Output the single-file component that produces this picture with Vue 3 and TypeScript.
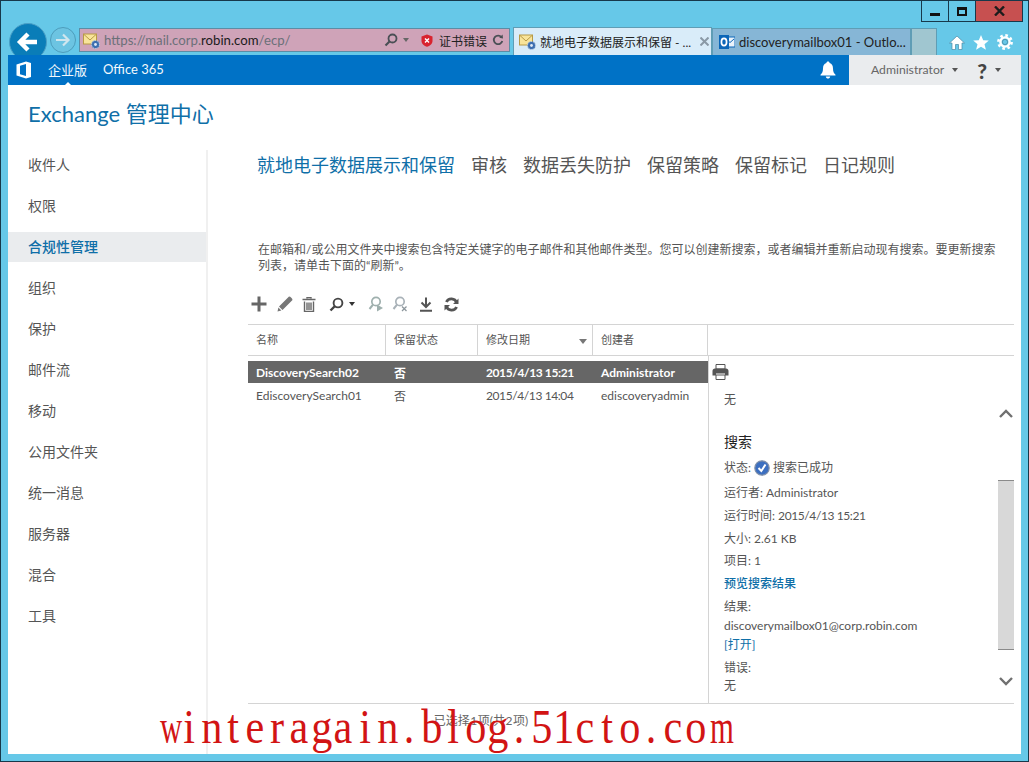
<script setup lang="ts">
const navItems = ['收件人', '权限', '合规性管理', '组织', '保护', '邮件流', '移动', '公用文件夹', '统一消息', '服务器', '混合', '工具']
const tabs = ['就地电子数据展示和保留', '审核', '数据丢失防护', '保留策略', '保留标记', '日记规则']
const rows = [
  { name: 'DiscoverySearch02', hold: '否', date: '2015/4/13 15:21', owner: 'Administrator', selected: true },
  { name: 'EdiscoverySearch01', hold: '否', date: '2015/4/13 14:04', owner: 'ediscoveryadmin', selected: false },
]
const watermark = 'winteragain.blog.51cto.com'.split('')
</script>

<template>
  <div class="window">
    <div class="titlebar">
      <div class="winbtns">
        <div class="winbtn"><span class="min-glyph"></span></div>
        <div class="winbtn"><span class="max-glyph"></span></div>
        <div class="winbtn close">
          <svg width="11" height="10" viewBox="0 0 11 10"><path d="M1 0.5 L10 9.5 M10 0.5 L1 9.5" stroke="#1c1c1c" stroke-width="2.4" /></svg>
        </div>
      </div>
    </div>

    <div class="browserbar">
      <div class="back">
        <svg width="24" height="24" viewBox="0 0 24 24"><path d="M21 12 H5 M12 4 L4 12 L12 20" fill="none" stroke="#fff" stroke-width="4.4" /></svg>
      </div>
      <div class="forward">
        <svg width="16" height="16" viewBox="0 0 16 16"><path d="M1 8 H13 M8 2.5 L13.5 8 L8 13.5" fill="none" stroke="#cfe6ee" stroke-width="2.2" /></svg>
      </div>
      <div class="address">
        <svg class="fav" width="18" height="18" viewBox="0 0 18 18">
          <rect x="0.5" y="2" width="13" height="10" fill="#f8e49a" stroke="#b89a45" />
          <path d="M1 2.5 L7 8 L13 2.5" fill="none" stroke="#b89a45" />
          <circle cx="12.5" cy="12.5" r="4" fill="#3d6fb0" stroke="#c8d8ea" stroke-dasharray="1.5 1" />
          <circle cx="12.5" cy="12.5" r="1.4" fill="#dfe9f5" />
        </svg>
        <span class="url">https://mail.corp.<b>robin.com</b>/ecp/</span>
        <svg class="addr-search" width="14" height="14" viewBox="0 0 14 14"><circle cx="8.5" cy="5.5" r="4" fill="none" stroke="#4a4f55" stroke-width="1.8" /><path d="M5.5 8.5 L1.5 12.5" stroke="#4a4f55" stroke-width="2.2" /></svg>
        <span class="addr-caret"></span>
        <svg class="cert" width="12" height="13" viewBox="0 0 12 13"><path d="M6 0.5 L11.5 2.5 V7 C11.5 10 8.5 12 6 12.7 C3.5 12 0.5 10 0.5 7 V2.5 Z" fill="#d8232f" /><path d="M4 4.5 L8 8.5 M8 4.5 L4 8.5" stroke="#fff" stroke-width="1.4" /></svg>
        <span class="cert-text">证书错误</span>
        <svg class="reload" width="12" height="12" viewBox="0 0 12 12"><path d="M9.5 3.2 A4.3 4.3 0 1 0 10.3 7" fill="none" stroke="#4a4f55" stroke-width="1.8" /><path d="M7.2 3.8 L11 4.4 L10.6 0.6 Z" fill="#4a4f55" /></svg>
      </div>
      <div class="btab active">
        <svg width="18" height="18" viewBox="0 0 18 18">
          <rect x="0.5" y="2" width="13" height="10" fill="#f8e49a" stroke="#b89a45" />
          <path d="M1 2.5 L7 8 L13 2.5" fill="none" stroke="#b89a45" />
          <circle cx="12.5" cy="12.5" r="4" fill="#3d6fb0" stroke="#c8d8ea" stroke-dasharray="1.5 1" />
          <circle cx="12.5" cy="12.5" r="1.4" fill="#dfe9f5" />
        </svg>
        <span class="btab-text">就地电子数据展示和保留 - ...</span>
        <svg width="9" height="9" viewBox="0 0 9 9"><path d="M0.5 0.5 L8.5 8.5 M8.5 0.5 L0.5 8.5" stroke="#8a99a6" stroke-width="2" /></svg>
      </div>
      <div class="btab inactive">
        <svg width="16" height="16" viewBox="0 0 16 16">
          <rect x="6" y="3" width="10" height="10" fill="#eaf3fb" stroke="#0b66b8" />
          <path d="M7 5 L11 8.5 L15 5" fill="none" stroke="#0b66b8" />
          <rect x="0" y="1" width="10" height="14" fill="#0b66b8" />
          <ellipse cx="5" cy="8" rx="2.6" ry="3.6" fill="none" stroke="#fff" stroke-width="1.7" />
        </svg>
        <span class="btab-text">discoverymailbox01 - Outlo...</span>
      </div>
      <div class="newtab"></div>
      <div class="tools">
        <svg width="16" height="15" viewBox="0 0 16 15"><path d="M0.5 8 L8 1 L15.5 8 H13 V14.5 H9.5 V9.5 H6.5 V14.5 H3 V8 Z" fill="#fff" stroke="#4b8aa5" stroke-width="0.7" /></svg>
        <svg width="16" height="15" viewBox="0 0 16 15"><path d="M8 0 L10.2 5.2 L15.8 5.6 L11.5 9.2 L12.9 14.8 L8 11.8 L3.1 14.8 L4.5 9.2 L0.2 5.6 L5.8 5.2 Z" fill="#fff" /></svg>
        <svg width="16" height="16" viewBox="0 0 16 16"><circle cx="8" cy="8" r="4.6" fill="none" stroke="#fff" stroke-width="2.4" /><circle cx="8" cy="8" r="6.6" fill="none" stroke="#fff" stroke-width="2.6" stroke-dasharray="2.6 2.6" /><circle cx="8" cy="8" r="2.6" fill="none" stroke="#4b8aa5" stroke-width="0.8" /></svg>
      </div>
    </div>

    <div class="page">
      <div class="topnav">
        <svg class="office" width="16" height="18" viewBox="0 0 16 18"><path d="M0.5 3.5 L10 0.5 L15 2 V16 L10 17.5 L0.5 14.5 Z M4 4.8 V13.2 L10 15 V3 Z" fill="#fff" fill-rule="evenodd" /></svg>
        <span class="topnav-item current">企业版</span>
        <span class="topnav-item">Office 365</span>
        <svg class="bell" width="16" height="18" viewBox="0 0 16 18"><path d="M8 0.5 C9 0.5 9.6 1.2 9.6 2 C12 2.8 13 4.8 13 7.5 C13 10.5 13.8 12.2 15.5 13.8 V14.6 H0.5 V13.8 C2.2 12.2 3 10.5 3 7.5 C3 4.8 4 2.8 6.4 2 C6.4 1.2 7 0.5 8 0.5 Z M5.8 15.4 H10.2 C10 16.7 9 17.5 8 17.5 C7 17.5 6 16.7 5.8 15.4 Z" fill="#fff" /></svg>
        <div class="user">
          <span class="user-name">Administrator</span>
          <span class="caret"></span>
          <span class="help">?</span>
          <span class="caret"></span>
        </div>
      </div>

      <div class="title">Exchange 管理中心</div>

      <div class="content">
        <nav class="sidebar">
          <div v-for="item in navItems" :key="item" class="side-item" :class="{ on: item === '合规性管理' }">{{ item }}</div>
        </nav>

        <main class="main">
          <div class="tabs">
            <span v-for="(t, i) in tabs" :key="t" class="tab" :class="{ on: i === 0 }">{{ t }}</span>
          </div>
          <p class="desc">在邮箱和/或公用文件夹中搜索包含特定关键字的电子邮件和其他邮件类型。您可以创建新搜索，或者编辑并重新启动现有搜索。要更新搜索列表，请单击下面的“刷新”。</p>

          <div class="toolbar">
            <svg class="t-add" width="16" height="16" viewBox="0 0 16 16"><path d="M8 0.5 V15.5 M0.5 8 H15.5" stroke="#666" stroke-width="3" /></svg>
            <svg class="t-edit" width="16" height="16" viewBox="0 0 16 16"><path d="M12 0.5 C13.5 0.5 15.5 2.5 15.5 4 L5.5 14 L2 10.5 Z M1.4 11.6 L4.4 14.6 L0.5 15.5 Z" fill="#777" /></svg>
            <svg class="t-del" width="14" height="15" viewBox="0 0 14 15"><path d="M5 1.5 V0.6 H9 V1.5 M0.5 2.5 H13.5 M2.5 4.5 V14.5 H11.5 V4.5 M5 5.5 V13 M7 5.5 V13 M9 5.5 V13" fill="none" stroke="#666" stroke-width="1.4" /></svg>
            <span class="tool-search">
              <svg width="15" height="15" viewBox="0 0 15 15"><circle cx="9" cy="6" r="4.4" fill="none" stroke="#444" stroke-width="1.9" /><path d="M6 9 L1.5 13.5" stroke="#444" stroke-width="2.4" /></svg>
              <span class="caret dark"></span>
            </span>
            <svg class="t-a" width="16" height="16" viewBox="0 0 16 16"><circle cx="8" cy="5.5" r="4.2" fill="none" stroke="#9fb0ae" stroke-width="1.7" /><path d="M5 8.7 L1.5 13" fill="none" stroke="#9fb0ae" stroke-width="2" /><path d="M9 8.5 L15 12 L9 15.5 Z" fill="#9fb0ae" /></svg>
            <svg class="t-b" width="16" height="16" viewBox="0 0 16 16"><circle cx="8" cy="5.5" r="4.2" fill="none" stroke="#a9b2b8" stroke-width="1.7" /><path d="M5 8.7 L1.5 13" fill="none" stroke="#a9b2b8" stroke-width="2" /><path d="M10 10.5 L14.5 15 M14.5 10.5 L10 15" fill="none" stroke="#8c969c" stroke-width="1.3" /></svg>
            <svg class="t-c" width="14" height="15" viewBox="0 0 14 15"><path d="M7 0.5 V10 M2.5 5.5 L7 10 L11.5 5.5 M1 13.8 H13" fill="none" stroke="#555" stroke-width="2" /></svg>
            <svg class="t-d" width="15" height="15" viewBox="0 0 15 15"><path d="M12.6 5.6 A5.5 5.5 0 0 0 2.4 5 M2.4 9.4 A5.5 5.5 0 0 0 12.6 10" fill="none" stroke="#555" stroke-width="2.8" /><path d="M14.5 1.5 V7 H9 Z M0.5 13.5 V8 H6 Z" fill="#555" /></svg>
          </div>

          <div class="thead">
            <div class="th w-name">名称</div>
            <div class="th w-hold">保留状态</div>
            <div class="th w-date">修改日期<span class="sort"></span></div>
            <div class="th w-owner">创建者</div>
          </div>

          <div class="tbody">
            <div class="list">
              <div v-for="r in rows" :key="r.name" class="row" :class="{ selected: r.selected }">
                <div class="td w-name">{{ r.name }}</div>
                <div class="td w-hold">{{ r.hold }}</div>
                <div class="td w-date">{{ r.date }}</div>
                <div class="td w-owner">{{ r.owner }}</div>
              </div>
            </div>

            <div class="detail">
              <svg class="printer" width="17" height="16" viewBox="0 0 17 16"><path d="M4 0.5 H13 V5 H4 Z M4 11 H13 V15.5 H4 Z" fill="#fff" stroke="#555" /><path d="M3 4.5 H14 C15.5 4.5 16.5 5.5 16.5 7 V11.5 H13 V9.5 H4 V11.5 H0.5 V7 C0.5 5.5 1.5 4.5 3 4.5 Z" fill="#555" /></svg>
              <div class="info">
                <div class="d-none1">无</div>
                <div class="d-head">搜索</div>
                <div class="d-status">状态:
                  <svg width="16" height="16" viewBox="0 0 16 16"><circle cx="8" cy="8" r="7.2" fill="#3c6fc0" stroke="#7f8fa8" stroke-width="1.2" /><path d="M4.5 8 L7.3 11 L11.5 4.5" fill="none" stroke="#fff" stroke-width="2" /></svg>
                  搜索已成功</div>
                <div class="d-l1">运行者: Administrator</div>
                <div class="d-l2">运行时间: <span class="digits">2015/4/13 15:21</span></div>
                <div class="d-l2">大小: 2.61 KB</div>
                <div class="d-l3">项目: 1</div>
                <div class="d-l2 link strong">预览搜索结果</div>
                <div class="d-l2">结果:</div>
                <div class="d-l4">discoverymailbox01@corp.robin.com</div>
                <div class="d-l4 link">[打开]</div>
                <div class="d-l2">错误:</div>
                <div class="d-l5">无</div>
              </div>
              <div class="scroll">
                <svg width="14" height="9" viewBox="0 0 14 9"><path d="M1 8 L7 2 L13 8" fill="none" stroke="#707070" stroke-width="2.4" /></svg>
                <div class="thumb"></div>
                <svg width="14" height="9" viewBox="0 0 14 9"><path d="M1 1 L7 7 L13 1" fill="none" stroke="#707070" stroke-width="2.4" /></svg>
              </div>
            </div>
          </div>

          <div class="footer">已选择 1 项(共 2 项)</div>
        </main>
      </div>

      <div class="watermark">
        <span v-for="(c, i) in watermark" :key="i" class="wm-char" :class="{ squeeze: c === 'w' || c === 'm' }">{{ c }}</span>
      </div>
    </div>
  </div>
</template>

<style>
html, body { margin: 0; padding: 0; overflow: hidden; }
</style>

<style scoped>
* { box-sizing: border-box; }

.window {
  width: 1029px;
  height: 762px;
  background: #66c8e8;
  border: 1px solid #17384a;
  padding: 0 7px 7px 7px;
  display: flex;
  flex-direction: column;
  font-family: Lato, "Noto Sans CJK SC", sans-serif;
  font-size: 12px;
  color: #555;
  overflow: hidden;
}

.titlebar { height: 21px; display: flex; justify-content: flex-end; margin-right: -2px; }
.winbtns { display: flex; height: 21px; border: 1px solid #17384a; border-top: none; }
.winbtn { width: 27px; display: flex; align-items: center; justify-content: center; border-right: 1px solid #17384a; }
.winbtn.close { width: 46px; background: #c75050; border-right: none; }
.min-glyph { width: 10px; height: 3px; background: #111; margin-top: 7px; }
.max-glyph { width: 10px; height: 9px; border: 2px solid #111; border-top-width: 3px; }

.browserbar { height: 33px; display: flex; align-items: flex-end; position: relative; }
.back {
  width: 38px; height: 38px; border-radius: 50%;
  background: #0a7db8; border: 1px solid #4a9fc6;
  margin: 0 3px -6px 1px; flex: none;
  display: flex; align-items: center; justify-content: center;
}
.forward {
  width: 26px; height: 26px; border-radius: 50%;
  border: 1px solid #4d9dbc;
  background: #6cc4e2;
  margin: 0 3px 2px 0; flex: none;
  display: flex; align-items: center; justify-content: center;
}
.address {
  width: 431px; height: 24px;
  background: #cfa3b8; border: 1px solid #5c8da5;
  margin-bottom: 3px;
  display: flex; align-items: center;
  padding-left: 3px;
  flex: none;
}
.fav { flex: none; margin-top: 1px; }
.url { margin-left: 3px; font-size: 13.2px; color: #6b7078; width: 280px; flex: none; white-space: nowrap; }
.url b { color: #1b1b1b; font-weight: 400; }
.addr-search { margin-left: 0; flex: none; }
.addr-caret { margin-left: 5px; border: 3.5px solid transparent; border-top: 4px solid #666; border-bottom: none; }
.cert { margin-left: 12px; flex: none; }
.cert-text { margin-left: 6px; color: #222; font-size: 12px; white-space: nowrap; flex: none; }
.reload { margin-left: 5px; flex: none; }

.btab {
  width: 199px; height: 27px;
  border: 1px solid #5f9db5; border-bottom: none;
  display: flex; align-items: center;
  padding-left: 5px; gap: 3px;
  flex: none; white-space: nowrap; overflow: hidden;
}
.btab.active { background: #d9ecf9; margin-left: 3px; color: #222; height: 28px; }
.btab.inactive { background: #86b6d6; color: #222; padding-left: 6px; gap: 4px; }
.btab-text { font-size: 12px; }
.btab.active .btab-text { width: 157px; flex: none; }
.btab.inactive .btab-text { font-size: 13px; }
.newtab { width: 26px; height: 27px; background: #a0c6d0; border: 1px solid #5f9db5; border-bottom: none; flex: none; }
.tools { display: flex; gap: 8px; align-items: center; margin-left: 12px; height: 26px; }

.page { flex: 1; background: #fff; display: flex; flex-direction: column; position: relative; min-height: 0; }

.topnav { height: 30px; background: #0072c6; display: flex; align-items: center; color: #fff; flex: none; }
.office { margin-left: 8px; flex: none; }
.topnav-item { font-size: 13px; color: #f2f8fc; padding-bottom: 2px; }
.topnav-item.current { margin-left: 16px; margin-right: 16px; position: relative; }
.topnav-item.current::after {
  content: "";
  position: absolute; left: 50%; bottom: -6px; margin-left: -5px;
  border: 5px solid transparent; border-bottom-color: #fff; border-top: none;
}
.bell { margin-left: auto; margin-right: 13px; flex: none; }
.user { width: 172px; height: 30px; background: #eaecee; display: flex; align-items: center; padding-left: 22px; color: #666; flex: none; }
.user-name { font-size: 12.2px; padding-bottom: 1px; }
.caret { display: inline-block; border: 3.5px solid transparent; border-top: 4px solid #555; border-bottom: none; margin-left: 8px; }
.caret.dark { border-top-color: #333; margin-left: 5px; }
.help { font-size: 21px; font-weight: 900; color: #444; margin-left: 19px; line-height: 1; }

.title { height: 65px; padding: 13px 0 0 20px; font-size: 22px; line-height: 32px; color: #0f6fa8; flex: none; }

.content { flex: 1; display: flex; min-height: 0; }
.sidebar { width: 200px; border-right: 2px solid #f0f0f0; display: flex; flex-direction: column; gap: 11px; flex: none; }
.side-item { height: 30px; line-height: 30px; padding-left: 20px; font-size: 14px; color: #555; }
.side-item.on { background: #eaecee; color: #0f6fa8; font-weight: 500; width: 198px; }

.main { flex: 1; padding: 0 7px 0 40px; display: flex; flex-direction: column; min-width: 0; }
.tabs { height: 30px; display: flex; gap: 16px; padding-left: 9px; align-items: center; flex: none; padding-bottom: 3px; }
.tab { font-size: 18px; color: #555; font-weight: 400; }
.tab.on { color: #0f6fa8; }
.desc { margin: 62px 0 0; padding: 0 10px; height: 32px; font-size: 12px; line-height: 16px; color: #555; flex: none; }

.toolbar { height: 30px; margin-top: 15px; display: flex; align-items: center; padding-left: 3px; flex: none; }
.t-edit { margin-left: 10px; }
.t-del { margin-left: 9px; }
.tool-search { display: inline-flex; align-items: center; margin-left: 13px; }
.t-a { margin-left: 13px; }
.t-b { margin-left: 8px; }
.t-c { margin-left: 11px; }
.t-d { margin-left: 11px; }

.thead { height: 32px; display: flex; border-top: 1px solid #d4d4d4; border-bottom: 1px solid #d4d4d4; flex: none; margin-top: 5px; }
.th { display: flex; align-items: center; padding: 0 0 2px 8px; font-size: 11px; color: #555; border-right: 1px solid #d4d4d4; position: relative; }
.sort { position: absolute; right: 5px; top: 14px; border: 4px solid transparent; border-top: 5px solid #777; border-bottom: none; }
.w-name { width: 138px; }
.w-hold { width: 92px; }
.w-date { width: 115px; }
.w-owner { width: 115px; }

.tbody { height: 348px; display: flex; border-bottom: 1px solid #d4d4d4; flex: none; }
.list { width: 460px; padding-top: 5px; flex: none; }
.row { height: 23px; display: flex; align-items: center; }
.row.selected { background: #666; color: #fff; font-weight: 700; height: 22px; margin-bottom: 1px; }
.td { padding-left: 8px; font-size: 12px; white-space: nowrap; }
.td.w-date, .digits { letter-spacing: -0.4px; }

.detail { flex: 1; display: flex; border-left: 1px solid #d4d4d4; position: relative; min-width: 0; }
.printer { position: absolute; left: 3px; top: 8px; }
.info { flex: 1; padding: 36px 0 0 15px; min-width: 0; }
.info > div { line-height: 16px; white-space: nowrap; }
.d-head { font-size: 14px; color: #222; margin-top: 24px; line-height: 20px !important; }
.d-status { margin-top: 8px; display: flex; align-items: center; gap: 3px; height: 16px; }
.d-l1 { margin-top: 9px; }
.d-l2 { margin-top: 7px; }
.d-l3 { margin-top: 6px; }
.d-l4 { margin-top: 3px; }
.d-l5 { margin-top: 2px; }
.link { color: #0f6fa8; }
.strong { font-weight: 500; }

.scroll { width: 16px; display: flex; flex-direction: column; align-items: center; padding-top: 53px; flex: none; }
.thumb { width: 16px; height: 170px; margin-top: 62px; margin-bottom: 27px; background: #d8d8d8; border-top: 1px solid #8a8a8a; border-bottom: 1px solid #8a8a8a; }

.footer { font-size: 12px; color: #666; padding: 7px 300px 0 0; text-align: center; word-spacing: -2.5px; }

.watermark {
  position: absolute; left: 148px; top: 648px;
  display: flex;
  font-family: "Liberation Serif", serif;
  font-size: 48px; line-height: 48px;
  color: #d21414;
  pointer-events: none;
}
.wm-char { width: 22px; text-align: center; display: inline-block; transform: scaleX(0.88); }
.wm-char.squeeze { transform: scaleX(0.64); }
</style>
